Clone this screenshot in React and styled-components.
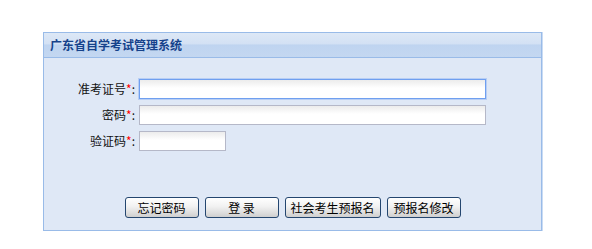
import { Fragment } from "react";
import styled, { createGlobalStyle } from "styled-components";

const GlobalStyle = createGlobalStyle`
  body {
    margin: 0;
    background: #fff;
    font-family: "Noto Sans CJK SC", "Liberation Sans", sans-serif;
    font-size: 12px;
  }
`;

const Page = styled.div`
  padding: 32px 0 0 43px;
`;

const Panel = styled.div`
  width: 499px;
  box-sizing: border-box;
  border: 1px solid #99bbe8;
  box-shadow: 1px 0 0 #c9dbf3;
`;

const Header = styled.div`
  height: 24px;
  display: flex;
  align-items: center;
  padding-left: 6px;
  border-bottom: 1px solid #99bbe8;
  background: linear-gradient(#dde8f6 0%, #d3e1f4 45%, #bfd4f0 50%, #c3d7f1 100%);
  color: #15428b;
  font-weight: bold;
  font-size: 12px;
  line-height: 1;
`;

const Body = styled.div`
  background: #dfe8f6;
  padding: 21px 0 12px;
`;

const Form = styled.div`
  display: grid;
  grid-template-columns: 91px auto;
  column-gap: 4px;
  row-gap: 6px;
  align-items: center;
  justify-items: start;
`;

const Label = styled.label`
  justify-self: end;
  color: #111;
  font-size: 12px;
  line-height: 20px;
  white-space: nowrap;
`;

const Star = styled.span`
  color: #ff0000;
`;

const Input = styled.input`
  box-sizing: border-box;
  width: ${(p) => p.$w}px;
  height: 20px;
  margin: 0;
  padding: 1px 3px;
  border: 1px solid ${(p) => (p.$focus ? "#6f9ff0" : "#b5b8c8")};
  box-shadow: ${(p) => (p.$focus ? "0 0 0 1px rgba(111,159,240,0.35)" : "none")};
  background: linear-gradient(#ececec 0%, #fff 45%);
  outline: none;
  font-size: 12px;
`;

const Buttons = styled.div`
  margin-top: 46px;
  display: flex;
  justify-content: center;
  gap: 6px;
`;

const Btn = styled.button`
  width: ${(p) => p.$w}px;
  height: 21px;
  box-sizing: border-box;
  padding: 0;
  border: 1px solid #24466f;
  border-radius: 3px;
  background: linear-gradient(#ffffff 0%, #f1f1f1 45%, #dcdcdc 80%, #cfcfcf 100%);
  color: #000;
  font-family: "Noto Sans CJK SC", sans-serif;
  font-size: 12px;
  line-height: 19px;
  cursor: pointer;
`;

const fields = [
  { label: "准考证号", w: 347, focus: true },
  { label: "密码", w: 347 },
  { label: "验证码", w: 87 },
];

export default function App() {
  return (
    <Page>
      <GlobalStyle />
      <Panel>
        <Header>广东省自学考试管理系统</Header>
        <Body>
          <Form>
            {fields.map((f) => (
              <Fragment key={f.label}>
                <Label>
                  {f.label}
                  <Star>*</Star>:
                </Label>
                <Input $w={f.w} $focus={f.focus} />
              </Fragment>
            ))}
          </Form>
          <Buttons>
            <Btn $w={74}>忘记密码</Btn>
            <Btn $w={74}>登 录</Btn>
            <Btn $w={96}>社会考生预报名</Btn>
            <Btn $w={74}>预报名修改</Btn>
          </Buttons>
        </Body>
      </Panel>
    </Page>
  );
}
